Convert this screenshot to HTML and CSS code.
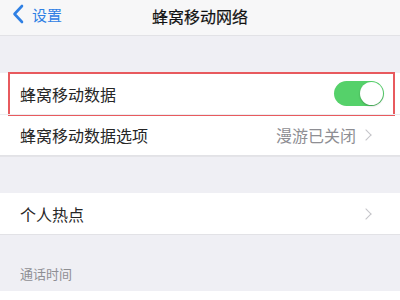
FILE: index.html
```html
<!DOCTYPE html>
<html lang="zh">
<head>
	<meta charset="utf-8">
	<title>蜂窝移动网络</title>
	<link rel="stylesheet" href="styles.css">
</head>
<body>
	<header class="nav">
		<a class="nav__back">
			<svg width="12" height="20" viewBox="0 0 12 20"><polyline points="10,2 2.5,10 10,18" fill="none" stroke="#2f80e4" stroke-width="2.6" stroke-linecap="round" stroke-linejoin="round"/></svg>
			<span>设置</span>
		</a>
		<div class="nav__title">蜂窝移动网络</div>
	</header>

	<div class="gap gap--top"></div>
	<div class="group">
		<div class="row row--marked">
			<span class="row__label">蜂窝移动数据</span>
			<span class="switch is-on"><span class="switch__knob"></span></span>
		</div>
		<div class="row">
			<span class="row__label">蜂窝移动数据选项</span>
			<span class="row__value">漫游已关闭</span>
			<span class="chev"></span>
		</div>
	</div>

	<div class="gap gap--mid"></div>
	<div class="group">
		<div class="row">
			<span class="row__label">个人热点</span>
			<span class="chev"></span>
		</div>
	</div>

	<div class="section-head">通话时间</div>
	<div class="group">
		<div class="row"></div>
	</div>
</body>
</html>
```

FILE: styles.css
```css
* {
	box-sizing: border-box;
}

html,
body {
	margin: 0;
	padding: 0;
}

body {
	width: 400px;
	height: 300px;
	overflow: hidden;
	background-color: #efeff4;
	font-family: "Noto Sans CJK SC", "Noto Sans", sans-serif;
	color: #262626;
}

.nav {
	position: relative;
	height: 36px;
	display: flex;
	align-items: center;
	background-color: #f7f7f8;
	border-bottom: 1px solid #e2e2e6;
}

.nav__back {
	display: flex;
	align-items: center;
	gap: 8px;
	padding-left: 12px;
	color: #2f80e4;
	font-size: 15px;
	margin-top: -7px;
}

.nav__title {
	position: absolute;
	left: 0;
	right: 0;
	top: 4px;
	text-align: center;
	font-size: 16px;
	font-weight: 400;
	color: #111;
	-webkit-text-stroke: 0.2px #111;
}

.gap--top {
	height: 37px;
}

.gap--mid {
	height: 37px;
	border-top: 1px solid #e4e4e8;
}

.group {
	background-color: #fff;
	border-bottom: 1px solid #e2e2e6;
}

.row {
	position: relative;
	height: 41px;
	display: flex;
	align-items: center;
	padding: 0 20px;
	font-size: 16px;
}

.row + .row {
	border-top: 1px solid #ececef;
}

.row__label {
	flex: 1;
}

.row__value {
	color: #8e8e93;
	margin-right: 6px;
}

.row--marked::after {
	content: "";
	position: absolute;
	left: 8px;
	right: 5px;
	top: -1px;
	bottom: -2px;
	border: 2px solid #e85a5e;
}

.chev {
	width: 8px;
	height: 8px;
	border-top: 1.5px solid #c4c4c8;
	border-right: 1.5px solid #c4c4c8;
	transform: rotate(45deg);
	margin-right: 10px;
}

.switch {
	position: relative;
	width: 50px;
	height: 25px;
	border-radius: 13px;
	background-color: #55d16a;
	margin-right: -4px;
}

.switch__knob {
	position: absolute;
	right: 1px;
	top: 1px;
	width: 23px;
	height: 23px;
	border-radius: 50%;
	background-color: #fff;
	box-shadow: 0 1px 2px rgba(0, 0, 0, 0.25);
}

.section-head {
	height: 56px;
	padding: 29px 0 0 20px;
	font-size: 13px;
	color: #8e8e93;
}
```
